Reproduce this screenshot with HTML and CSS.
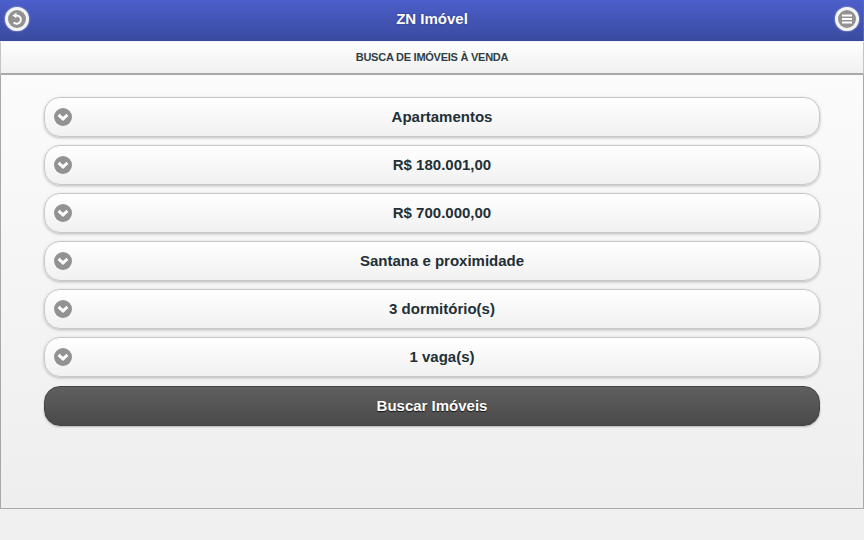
FILE: index.html
```html
<!DOCTYPE html>
<html lang="pt-BR">
<head>
    <meta charset="UTF-8">
    <meta name="viewport" content="width=device-width, initial-scale=1.0">
    <title>ZN Imóvel</title>
    <link rel="stylesheet" href="styles.css">
</head>
<body>
    <div class="page">
        <header class="header">
            <a class="round-btn" href="#">
                <span class="round-icon">
                    <svg viewBox="0 0 18 18" width="18" height="18">
                        <path d="M8 5.4 H9 A4.2 4.2 0 1 1 5.6 12.4" fill="none" stroke="#fff" stroke-width="2"/>
                        <path d="M4.4 5.4 L8.4 2.6 V8.2 Z" fill="#fff"/>
                    </svg>
                </span>
            </a>
            <h1>ZN Imóvel</h1>
            <a class="round-btn" href="#">
                <span class="round-icon">
                    <svg viewBox="0 0 18 18" width="18" height="18">
                        <path d="M4 5.5h10M4 9h10M4 12.5h10" fill="none" stroke="#fff" stroke-width="2"/>
                    </svg>
                </span>
            </a>
        </header>
        <div class="subheader">BUSCA DE IMÓVEIS À VENDA</div>
        <main class="content">
            <div class="select-btn"><span class="arrow"><svg viewBox="0 0 18 18" width="18" height="18"><path d="M4.6 6.8 9 11l4.4-4.2" fill="none" stroke="#fff" stroke-width="3"/></svg></span>Apartamentos</div>
            <div class="select-btn"><span class="arrow"><svg viewBox="0 0 18 18" width="18" height="18"><path d="M4.6 6.8 9 11l4.4-4.2" fill="none" stroke="#fff" stroke-width="3"/></svg></span>R$ 180.001,00</div>
            <div class="select-btn"><span class="arrow"><svg viewBox="0 0 18 18" width="18" height="18"><path d="M4.6 6.8 9 11l4.4-4.2" fill="none" stroke="#fff" stroke-width="3"/></svg></span>R$ 700.000,00</div>
            <div class="select-btn"><span class="arrow"><svg viewBox="0 0 18 18" width="18" height="18"><path d="M4.6 6.8 9 11l4.4-4.2" fill="none" stroke="#fff" stroke-width="3"/></svg></span>Santana e proximidade</div>
            <div class="select-btn"><span class="arrow"><svg viewBox="0 0 18 18" width="18" height="18"><path d="M4.6 6.8 9 11l4.4-4.2" fill="none" stroke="#fff" stroke-width="3"/></svg></span>3 dormitório(s)</div>
            <div class="select-btn"><span class="arrow"><svg viewBox="0 0 18 18" width="18" height="18"><path d="M4.6 6.8 9 11l4.4-4.2" fill="none" stroke="#fff" stroke-width="3"/></svg></span>1 vaga(s)</div>
            <div class="search-btn">Buscar Imóveis</div>
        </main>
    </div>
</body>
</html>
```

FILE: styles.css
```css
body {
    font-family: "Liberation Sans", Arial, sans-serif;
    background-color: #f0f0f0;
    margin: 0;
}
.page {
    height: 509px;
    display: flex;
    flex-direction: column;
}
.header {
    height: 41px;
    display: flex;
    align-items: center;
    justify-content: space-between;
    padding: 0 4px 3px 5px;
    box-sizing: border-box;
    background: linear-gradient(#4c5fcb, #384a9e);
    border-right: 1px solid #5a68b0;
}
.header h1 {
    margin: 0;
    font-size: 15px;
    line-height: 20px;
    color: #fff;
    font-weight: bold;
    text-shadow: 0 0 2px rgba(0, 0, 0, 0.4);
}
.round-btn {
    width: 24px;
    height: 24px;
    border-radius: 50%;
    background: #f4f4f4;
    display: flex;
    align-items: center;
    justify-content: center;
    box-shadow: 0 0 2px rgba(255, 255, 255, 0.7);
}
.round-icon {
    width: 18px;
    height: 18px;
    border-radius: 50%;
    background: #929292;
    display: block;
}
.round-icon svg, .arrow svg {
    display: block;
}
.subheader {
    height: 31px;
    margin-top: 1px;
    border: 1px solid #c4c4c4;
    border-width: 0 1px 2px;
    border-bottom-color: #a8a8a8;
    background: linear-gradient(#fff, #f0f0f0);
    font-size: 11px;
    letter-spacing: -0.25px;
    font-weight: bold;
    line-height: 31px;
    text-align: center;
    color: #2f3e46;
}
.content {
    flex: 1;
    display: flex;
    flex-direction: column;
    gap: 8px;
    padding: 22px 43px 0;
    border: 1px solid #a8a8a8;
    border-top: none;
    background: linear-gradient(#fbfbfb, #eeeeee);
}
.select-btn {
    position: relative;
    height: 38px;
    padding-left: 20px;
    border: 1px solid #c8c8c8;
    border-radius: 16px;
    background: linear-gradient(#fff, #f1f1f1);
    box-shadow: 0 1px 3px rgba(0, 0, 0, 0.25);
    font-size: 15px;
    font-weight: bold;
    line-height: 37px;
    text-align: center;
    color: #222f36;
}
.arrow {
    position: absolute;
    left: 9px;
    top: 9.5px;
    width: 18px;
    height: 18px;
    border-radius: 50%;
    background: #929292;
}
.search-btn {
    height: 38px;
    margin-top: 1px;
    border: 1px solid #444;
    border-radius: 16px;
    background: linear-gradient(#5f5f5f, #4a4a4a);
    box-shadow: 0 1px 2px rgba(0, 0, 0, 0.25);
    font-size: 15px;
    font-weight: bold;
    line-height: 38px;
    text-align: center;
    color: #fff;
    text-shadow: 0 1px 1px #111;
}
```
